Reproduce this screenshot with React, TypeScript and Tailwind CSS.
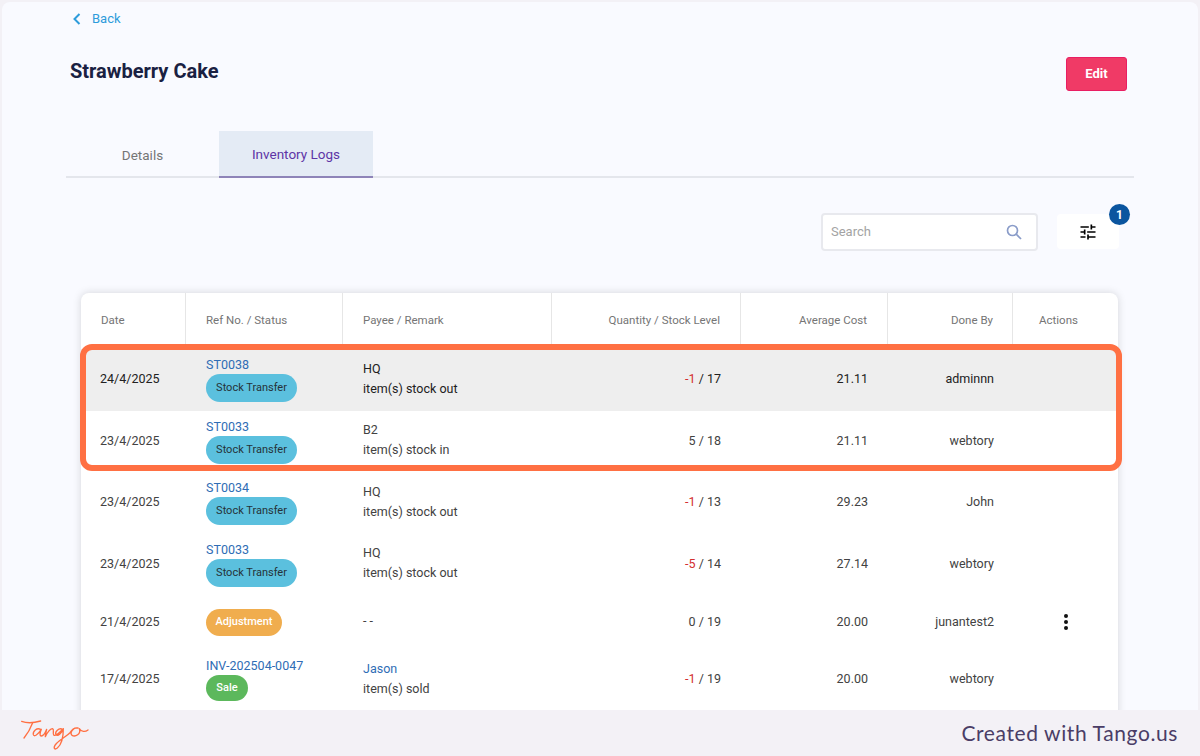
const rows = [
  { date: "24/4/2025", ref: "ST0038", badge: "Stock Transfer", payee: "HQ", remark: "item(s) stock out", delta: "-1", level: "17", cost: "21.11", by: "adminnn", grey: true },
  { date: "23/4/2025", ref: "ST0033", badge: "Stock Transfer", payee: "B2", remark: "item(s) stock in", delta: "5", level: "18", cost: "21.11", by: "webtory" },
  { date: "23/4/2025", ref: "ST0034", badge: "Stock Transfer", payee: "HQ", remark: "item(s) stock out", delta: "-1", level: "13", cost: "29.23", by: "John" },
  { date: "23/4/2025", ref: "ST0033", badge: "Stock Transfer", payee: "HQ", remark: "item(s) stock out", delta: "-5", level: "14", cost: "27.14", by: "webtory" },
  { date: "21/4/2025", badge: "Adjustment", payee: "- -", delta: "0", level: "19", cost: "20.00", by: "junantest2", menu: true },
  { date: "17/4/2025", ref: "INV-202504-0047", badge: "Sale", payee: "Jason", payeeLink: true, remark: "item(s) sold", delta: "-1", level: "19", cost: "20.00", by: "webtory" },
];

const cols = "grid grid-cols-[105px_157px_209px_189px_147px_125px_105px]";

function Badge({ label }: { label: string }) {
  if (label === "Stock Transfer") {
    return <span className="flex h-[28px] w-[91px] items-center justify-center rounded-full bg-[#5bc0de] text-[11px] text-[#263238]">{label}</span>;
  }
  if (label === "Adjustment") {
    return <span className="flex h-[27px] w-[76px] items-center justify-center rounded-full bg-[#f0ad4e] text-[11px] font-medium text-[#fff]">{label}</span>;
  }
  return <span className="flex h-[26px] w-[42px] items-center justify-center rounded-full bg-[#5cb85c] text-[11px] font-medium text-[#fff]">{label}</span>;
}

function TangoLogo() {
  return (
    <svg width="90" height="44" viewBox="0 0 270 132" fill="none" stroke="#ff7043" strokeWidth="4" strokeLinecap="round" strokeLinejoin="round" role="img" aria-label="Tango logo">
      <path d="M35 28 C50 34 75 32 92 27" />
      <path d="M68 32 C62 48 55 62 42 78" />
      <path d="M92 52 C80 46 68 58 70 68 C72 76 84 68 94 52 C90 62 88 72 94 72 C100 72 106 62 110 52 C108 60 106 68 106 74 C112 62 120 50 128 50 C134 52 126 66 132 70 C140 72 150 60 158 52 C146 46 134 60 138 68 C144 74 156 62 160 50 C160 70 156 96 142 108 C132 116 128 106 140 94 C152 82 170 72 180 62 C186 52 196 46 204 48 C190 46 178 62 186 70 C196 76 214 66 208 50 C214 60 226 60 234 54" />
    </svg>
  );
}

export default function App() {
  return (
    <div className="flex h-screen flex-col overflow-hidden bg-[#f3f1f6] font-['Roboto',sans-serif]">
      <div className="relative mx-[2px] mt-[2px] h-[708px] overflow-hidden rounded-t-[8px] bg-[#f9faff]">
        <a className="ml-[70px] mt-[9px] flex w-fit items-center gap-[10px] text-[13px] leading-[16px] text-[#2d9cdb]">
          <svg width="10" height="14" viewBox="0 0 10 14" fill="none" stroke="#2d9cdb" strokeWidth="2">
            <path d="M7.5 2 L2.5 7 L7.5 12" />
          </svg>
          Back
        </a>

        <div className="ml-[68px] mr-[71px] mt-[25px] flex items-start justify-between">
          <h1 className="mt-[7px] text-[20px] font-bold leading-[24px] text-[#1a2142]">Strawberry Cake</h1>
          <button className="mt-[5px] h-[34px] w-[61px] rounded-[3px] border border-[#e91e63] bg-[#f03a66] text-[13px] font-bold text-[#fff]">Edit</button>
        </div>

        <div className="ml-[64px] mr-[64px] mt-[40px] flex h-[47px] border-b-2 border-[#e4e6ec]">
          <div className="flex h-[47px] w-[153px] items-center justify-center pt-[1px] text-[13.5px] text-[#757575]">Details</div>
          <div className="flex h-[47px] w-[154px] items-center justify-center border-b-2 border-[#8e84b8] bg-[#e4ebf5] pt-[1px] text-[13.5px] text-[#5e35a6]">Inventory Logs</div>
        </div>

        <div className="mr-[79px] mt-[35px] flex justify-end gap-[19px]">
          <div className="flex h-[38px] w-[217px] items-center justify-between rounded-[4px] border-2 border-[#e8e9ee] bg-[#fff] pl-[8px] pr-[13px] text-[13px] text-[#a3a3a3]">
            Search
            <svg width="18" height="18" viewBox="0 0 18 18" fill="none" stroke="#8a9cc9" strokeWidth="1.7">
              <circle cx="7.5" cy="7.5" r="5" />
              <path d="M11.2 11.2 L16 16" />
            </svg>
          </div>
          <div className="relative mt-[1px] flex h-[35px] w-[62px] items-center justify-center rounded-[4px] bg-[#fff]">
            <svg width="20" height="20" viewBox="0 0 24 24" fill="#000">
              <path d="M3 17v2h6v-2H3zM3 5v2h10V5H3zm10 16v-2h8v-2h-8v-2h-2v6h2zM7 9v2H3v2h4v2h2V9H7zm14 4v-2H11v2h10zm-6-4h2V7h4V5h-4V3h-2v6z" />
            </svg>
            <span className="absolute right-[-11px] top-[-10px] flex h-[21px] w-[21px] items-center justify-center rounded-full bg-[#0b559f] text-[12px] font-bold text-[#fff]">1</span>
          </div>
        </div>

        <div className="ml-[79px] mr-[80px] mt-[42px] rounded-t-[8px] bg-[#fff] pb-[20px] shadow-[0_0_8px_rgba(0,0,0,0.15)]">
          <div className={`${cols} h-[56px] text-[11.5px] text-[#757575]`}>
            <div className="flex items-center border-r border-[#e6e6e6] pl-[20px]">Date</div>
            <div className="flex items-center border-r border-[#e6e6e6] pl-[20px]">Ref No. / Status</div>
            <div className="flex items-center border-r border-[#e6e6e6] pl-[20px]">Payee / Remark</div>
            <div className="flex items-center justify-end border-r border-[#e6e6e6] pr-[20px]">Quantity / Stock Level</div>
            <div className="flex items-center justify-end border-r border-[#e6e6e6] pr-[20px]">Average Cost</div>
            <div className="flex items-center justify-end border-r border-[#e6e6e6] pr-[19px]">Done By</div>
            <div className="flex items-center pl-[26px]">Actions</div>
          </div>

          {rows.map((r, i) => (
            <div key={i} className={`${cols} ${r.menu ? "h-[54px]" : "h-[61.5px]"} items-center text-[12.5px] ${r.grey ? "bg-[#eeeeee] text-[#212121]" : "text-[#424242]"}`}>
              <div className="pl-[19px]">{r.date}</div>
              <div className="flex flex-col items-start pl-[20px]">
                {r.ref && <a className="mb-[2px] leading-[15px] text-[#2f6db5]">{r.ref}</a>}
                <Badge label={r.badge} />
              </div>
              <div className="pb-[2px] pl-[20px] leading-[20px]">
                <div className={r.payeeLink ? "text-[#2f6db5]" : ""}>{r.payee}</div>
                {r.remark && <div>{r.remark}</div>}
              </div>
              <div className="pr-[20px] text-right">
                <span className={r.delta.startsWith("-") ? "text-[#d32f2f]" : ""}>{r.delta}</span> / {r.level}
              </div>
              <div className="pr-[20px] text-right">{r.cost}</div>
              <div className="pr-[19px] text-right">{r.by}</div>
              <div className="flex justify-center">
                {r.menu && (
                  <svg width="6" height="18" viewBox="0 0 6 18" fill="#111">
                    <circle cx="3" cy="3" r="2" />
                    <circle cx="3" cy="9" r="2" />
                    <circle cx="3" cy="15" r="2" />
                  </svg>
                )}
              </div>
            </div>
          ))}
        </div>

        {/* tango highlight over the first two rows */}
        <div className="absolute left-[78px] top-[342px] h-[127px] w-[1042px] rounded-[12px] border-[6px] border-[#ff7043]" />
      </div>

      <div className="flex h-[46px] items-start justify-between pl-[10px] pr-[22px] pt-[2px]">
        <TangoLogo />
        <span className="mt-[5px] font-['Lato',sans-serif] text-[21px] tracking-[0.6px] text-[#4a3d66]">Created with Tango.us</span>
      </div>
    </div>
  );
}
